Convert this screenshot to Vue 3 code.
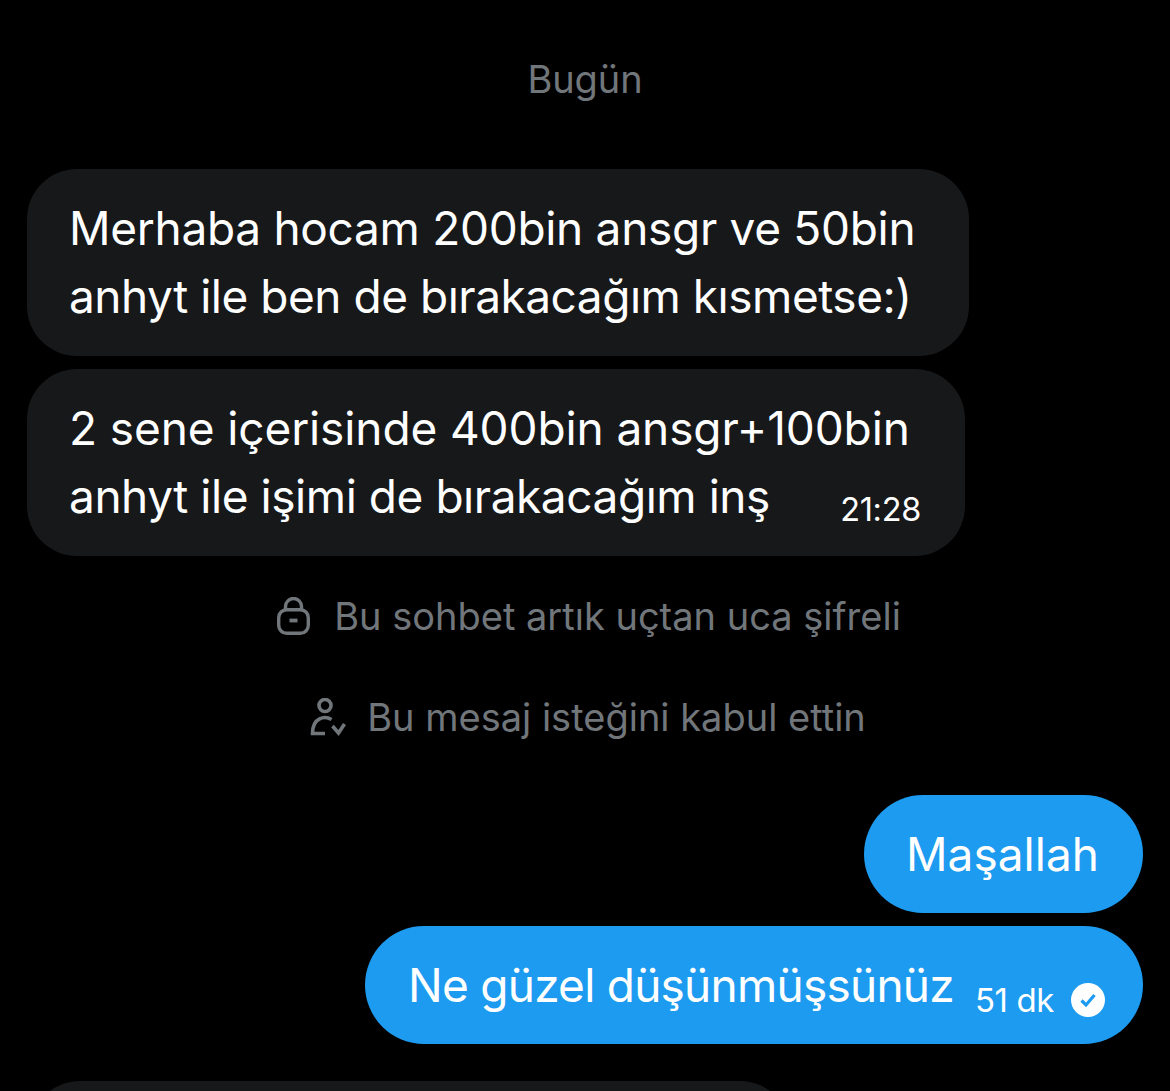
<script setup>
// tracking is tuned per line so the widths follow the original font
const received = [
  {
    width: 942,
    lines: [
      { text: 'Merhaba hocam 200bin ansgr ve 50bin', track: -0.3 },
      { text: 'anhyt ile ben de bırakacağım kısmetse:)', track: -0.48 }
    ]
  },
  {
    width: 938,
    time: '21:28',
    lines: [
      { text: '2 sene içerisinde 400bin ansgr+100bin', track: -0.11 },
      { text: 'anhyt ile işimi de bırakacağım inş', track: -0.45 }
    ]
  }
]
</script>

<template>
  <div class="chat">
    <div class="day">Bugün</div>

    <div class="group">
      <div
        v-for="(msg, i) in received"
        :key="i"
        class="bubble in"
        :style="{ width: msg.width + 'px' }"
      >
        <div
          v-for="line in msg.lines"
          :key="line.text"
          :style="{ letterSpacing: line.track + 'px' }"
        >{{ line.text }}</div>
        <span v-if="msg.time" class="time">{{ msg.time }}</span>
      </div>
    </div>

    <div class="notice first">
      <svg class="icon-lock" viewBox="0 0 33 38" fill="none" stroke="#71767b" stroke-width="3.4">
        <path d="M8.500 12V9.500a8 8 0 0 1 16 0V12" />
        <rect x="1.700" y="12.700" width="29.600" height="23.600" rx="8" />
        <path d="M12.500 23.500h8" stroke-width="3.800" />
      </svg>
      <span>Bu sohbet artık uçtan uca şifreli</span>
    </div>

    <div class="notice second">
      <svg class="icon-user" viewBox="0 0 36 38" fill="none" stroke="#71767b" stroke-width="3.6">
        <circle cx="15" cy="7.500" r="6" />
        <path d="M21.500 21.500C15 17.500 2.500 19 2.500 35.500H15" />
        <path d="M22.500 28l6 7 6-9" />
      </svg>
      <span>Bu mesaj isteğini kabul ettin</span>
    </div>

    <div class="group sent">
      <div class="bubble out short">Maşallah</div>
      <div class="bubble out last">
        <span class="tight">Ne güzel düşünmüşsünüz</span>
        <span class="stamp">51 dk</span>
        <svg class="seen" viewBox="0 0 34 34">
          <circle cx="17" cy="17" r="17" fill="#fff" />
          <path d="M10.500 17.500l4.500 4.500 8.500-10" fill="none" stroke="#1d9bf0" stroke-width="3.200" />
        </svg>
      </div>
    </div>

    <div class="next"></div>
  </div>
</template>

<style>
html,
body {
  margin: 0;
  background: #000;
}
</style>

<style scoped>
.chat {
  height: 1091px;
  overflow: hidden;
  background: #000;
  color: #e7e9ea;
  font-family: Inter, "Noto Sans", "Liberation Sans", sans-serif;
  display: flex;
  flex-direction: column;
  padding: 0 27px;
  box-sizing: border-box;
}

.day {
  margin-top: 55px;
  height: 48px;
  line-height: 48px;
  text-align: center;
  font-size: 38px;
  letter-spacing: -0.1px;
  color: #71767b;
}

.group {
  margin-top: 66px;
  display: flex;
  flex-direction: column;
  gap: 13px;
}

.bubble {
  position: relative;
  box-sizing: border-box;
  font-size: 46px;
  line-height: 68px;
  white-space: nowrap;
}

.in {
  height: 187px;
  padding: 25px 0 0 42px;
  background: #17181a;
  border-radius: 50px;
  color: #fff;
}

.time {
  position: absolute;
  right: 44px;
  bottom: 26px;
  font-size: 32.500px;
  line-height: 40px;
  letter-spacing: -0.3px;
}

.notice {
  display: flex;
  align-items: center;
  justify-content: center;
  font-size: 38px;
  line-height: 48px;
  color: #71767b;
}

.notice.first {
  margin-top: 36px;
  gap: 24px;
  padding-left: 8px;
}

.notice.second {
  margin-top: 53px;
  gap: 21px;
  padding-left: 6px;
}

.icon-lock {
  width: 33px;
  height: 38px;
}

.icon-user {
  width: 36px;
  height: 38px;
}

.sent {
  margin-top: 54px;
  align-items: flex-end;
}

.out {
  height: 118px;
  padding: 0 44px 0 43px;
  display: flex;
  align-items: center;
  background: #1d9bf0;
  border-radius: 59px;
  color: #fff;
}

.short {
  padding-left: 42px;
  letter-spacing: 0.02px;
}

.last {
  padding-right: 38px;
}

.tight {
  letter-spacing: -0.76px;
}

.stamp {
  margin-left: 21px;
  margin-top: 30px;
  font-size: 33px;
  line-height: 40px;
  letter-spacing: -0.4px;
}

.seen {
  margin-left: 17px;
  margin-top: 30px;
  width: 34px;
  height: 34px;
}

.next {
  flex: none;
  margin-top: 37px;
  width: 760px;
  height: 120px;
  margin-left: 3px;
  background: #17181a;
  border-radius: 50px;
}
</style>
